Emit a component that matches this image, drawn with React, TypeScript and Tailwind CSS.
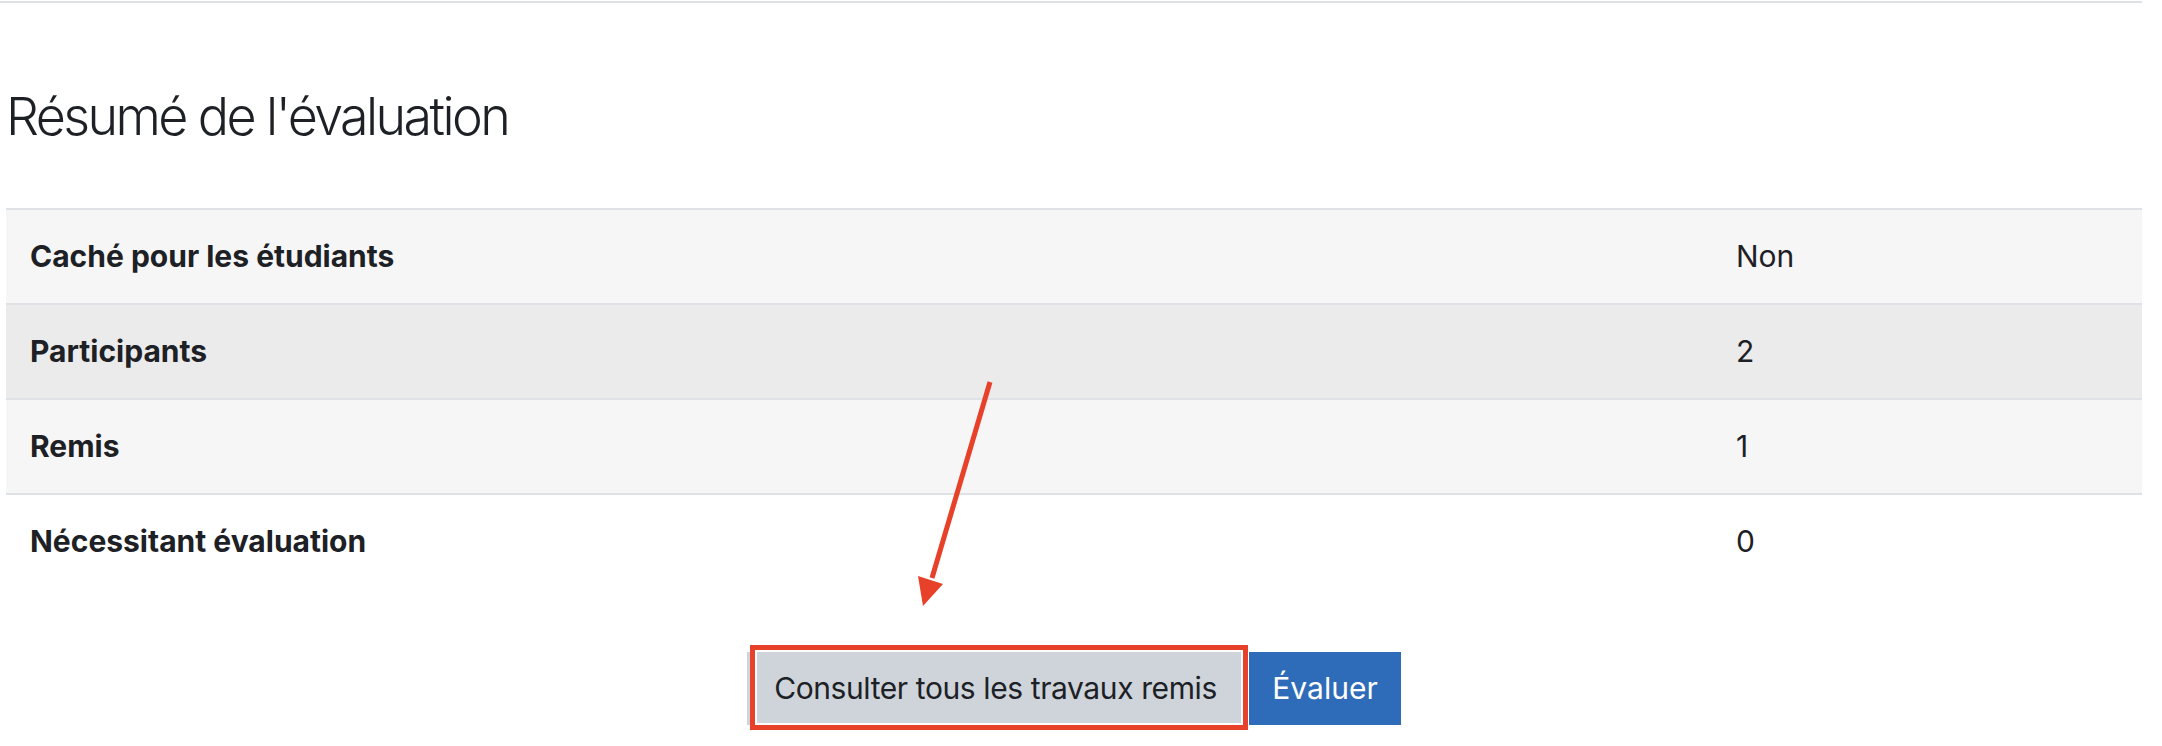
import React from "react";

const rows = [
  { label: "Caché pour les étudiants", value: "Non", bg: "bg-[#f6f6f6]" },
  { label: "Participants", value: "2", bg: "bg-[#ebebeb]" },
  { label: "Remis", value: "1", bg: "bg-[#f6f6f6]" },
  { label: "Nécessitant évaluation", value: "0", bg: "bg-white" },
];

export default function App() {
  return (
    <div
      className="relative w-[2162px] h-[746px] bg-white text-[#1d2125] overflow-hidden"
      style={{ fontFamily: "Inter, 'Noto Sans', 'Liberation Sans', sans-serif" }}
    >
      <div className="pr-[20px]">
        <div className="mt-[1px] h-[2px] bg-[#dee2e6]" />
        <div className="pl-[6px]">
          <h3 className="mt-[82px] text-[52px] leading-[63px] font-light tracking-[-2.6px]">
            Résumé de l'évaluation
          </h3>
          <div className="mt-[60px]">
            {rows.map((r) => (
              <div key={r.label} className={`flex border-t-2 border-[#dee2e6] ${r.bg}`}>
                <div className="w-[1706px] px-[24px] py-[24px] text-[30px] leading-[45px] font-bold">
                  {r.label}
                </div>
                <div className="flex-1 px-[24px] py-[24px] text-[30px] leading-[45px]">
                  {r.value}
                </div>
              </div>
            ))}
          </div>
          <div className="mt-[64px] flex justify-center gap-[5px]">
            <div className="relative">
              <button className="w-[497px] h-[73px] border-2 border-[#ced4da] bg-[#ced4da] text-[30px] leading-[45px] tracking-[-0.4px] text-[#1d2125] whitespace-nowrap">
                Consulter tous les travaux remis
              </button>
              <div className="absolute left-[3px] top-[-7px] w-[498px] h-[85px] border-[5px] border-[#e8412a]">
                <div className="w-full h-full border-2 border-white" />
              </div>
            </div>
            <button className="w-[152px] h-[73px] border-2 border-[#2e6bb9] bg-[#2e6bb9] text-[30px] leading-[45px] text-white whitespace-nowrap">
              Évaluer
            </button>
          </div>
        </div>
      </div>
      <svg
        className="absolute left-0 top-0 pointer-events-none"
        width="2162"
        height="746"
        viewBox="0 0 2162 746"
      >
        <line x1="990" y1="382" x2="932" y2="578" stroke="#e8412a" strokeWidth="5" />
        <polygon points="923,606 918,576 943,584" fill="#e8412a" />
      </svg>
    </div>
  );
}
